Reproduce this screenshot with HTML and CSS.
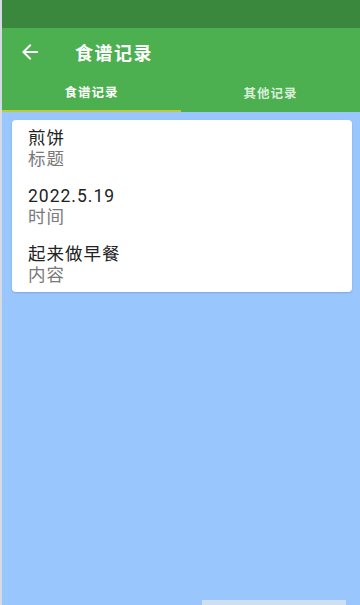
FILE: index.html
```html
<!DOCTYPE html>
<html lang="zh">
<head>
  <meta charset="UTF-8">
  <meta name="viewport" content="width=device-width, initial-scale=1.0">
  <link rel="stylesheet" href="styles.css">
  <title>食谱记录</title>
</head>
<body>
  <div class="app">
    <div class="status"></div>
    <div class="toolbar">
      <svg class="back" width="24" height="24" viewBox="0 0 24 24">
        <path d="M20 11H7.83l5.59-5.59L12 4l-8 8 8 8 1.41-1.41L7.83 13H20v-2z" fill="#fff"/>
      </svg>
      <h1 class="title">食谱记录</h1>
    </div>
    <div class="tabs">
      <div class="tab active">食谱记录</div>
      <div class="tab">其他记录</div>
    </div>
    <div class="content">
      <div class="card">
        <div class="item">
          <p class="value">煎饼</p>
          <p class="label">标题</p>
        </div>
        <div class="item">
          <p class="value">2022.5.19</p>
          <p class="label">时间</p>
        </div>
        <div class="item">
          <p class="value">起来做早餐</p>
          <p class="label">内容</p>
        </div>
      </div>
    </div>
    <div class="toast"></div>
  </div>
</body>
</html>
```

FILE: styles.css
```css
*{
  margin: 0;
  padding: 0;
  box-sizing: border-box;
}
body{
  width: 360px;
  height: 605px;
  overflow: hidden;
  font-family: Roboto, "Noto Sans CJK SC", sans-serif;
}
.app{
  position: relative;
  height: 100%;
  display: flex;
  flex-direction: column;
  border-left: 2px solid #d4dbe2;
  background: #98c6fd;
}
.status{
  height: 28px;
  background: #3a873e;
}
.toolbar{
  height: 48px;
  background: #4caf50;
  display: flex;
  align-items: center;
  padding-left: 16px;
}
.back{
  margin-right: 33px;
}
.title{
  color: #fff;
  font-size: 18px;
  font-weight: bold;
  letter-spacing: 1.5px;
}
.tabs{
  display: flex;
  height: 36px;
  background: #4caf50;
}
.tab{
  flex: 1;
  display: flex;
  align-items: center;
  justify-content: center;
  padding-bottom: 4px;
  color: rgba(255,255,255,0.8);
  font-size: 12.5px;
  font-weight: bold;
  letter-spacing: 1px;
}
.tab.active{
  color: #fff;
  border-bottom: 2px solid #c3c73a;
}
.content{
  flex: 1;
  padding: 8px 8px 0 10px;
}
.card{
  background: #fff;
  border-radius: 4px;
  padding: 8px 16px 6px;
  box-shadow: 0 1px 2px rgba(0,0,0,0.15);
}
.item + .item{
  margin-top: 16px;
}
.value,
.label{
  font-size: 17.5px;
  line-height: 21px;
  letter-spacing: 1px;
}
.value{
  color: #222;
}
.label{
  color: #7a7a7a;
}
.toast{
  position: absolute;
  left: 200px;
  bottom: 0;
  width: 144px;
  height: 5px;
  background: #cfdff3;
}
```
